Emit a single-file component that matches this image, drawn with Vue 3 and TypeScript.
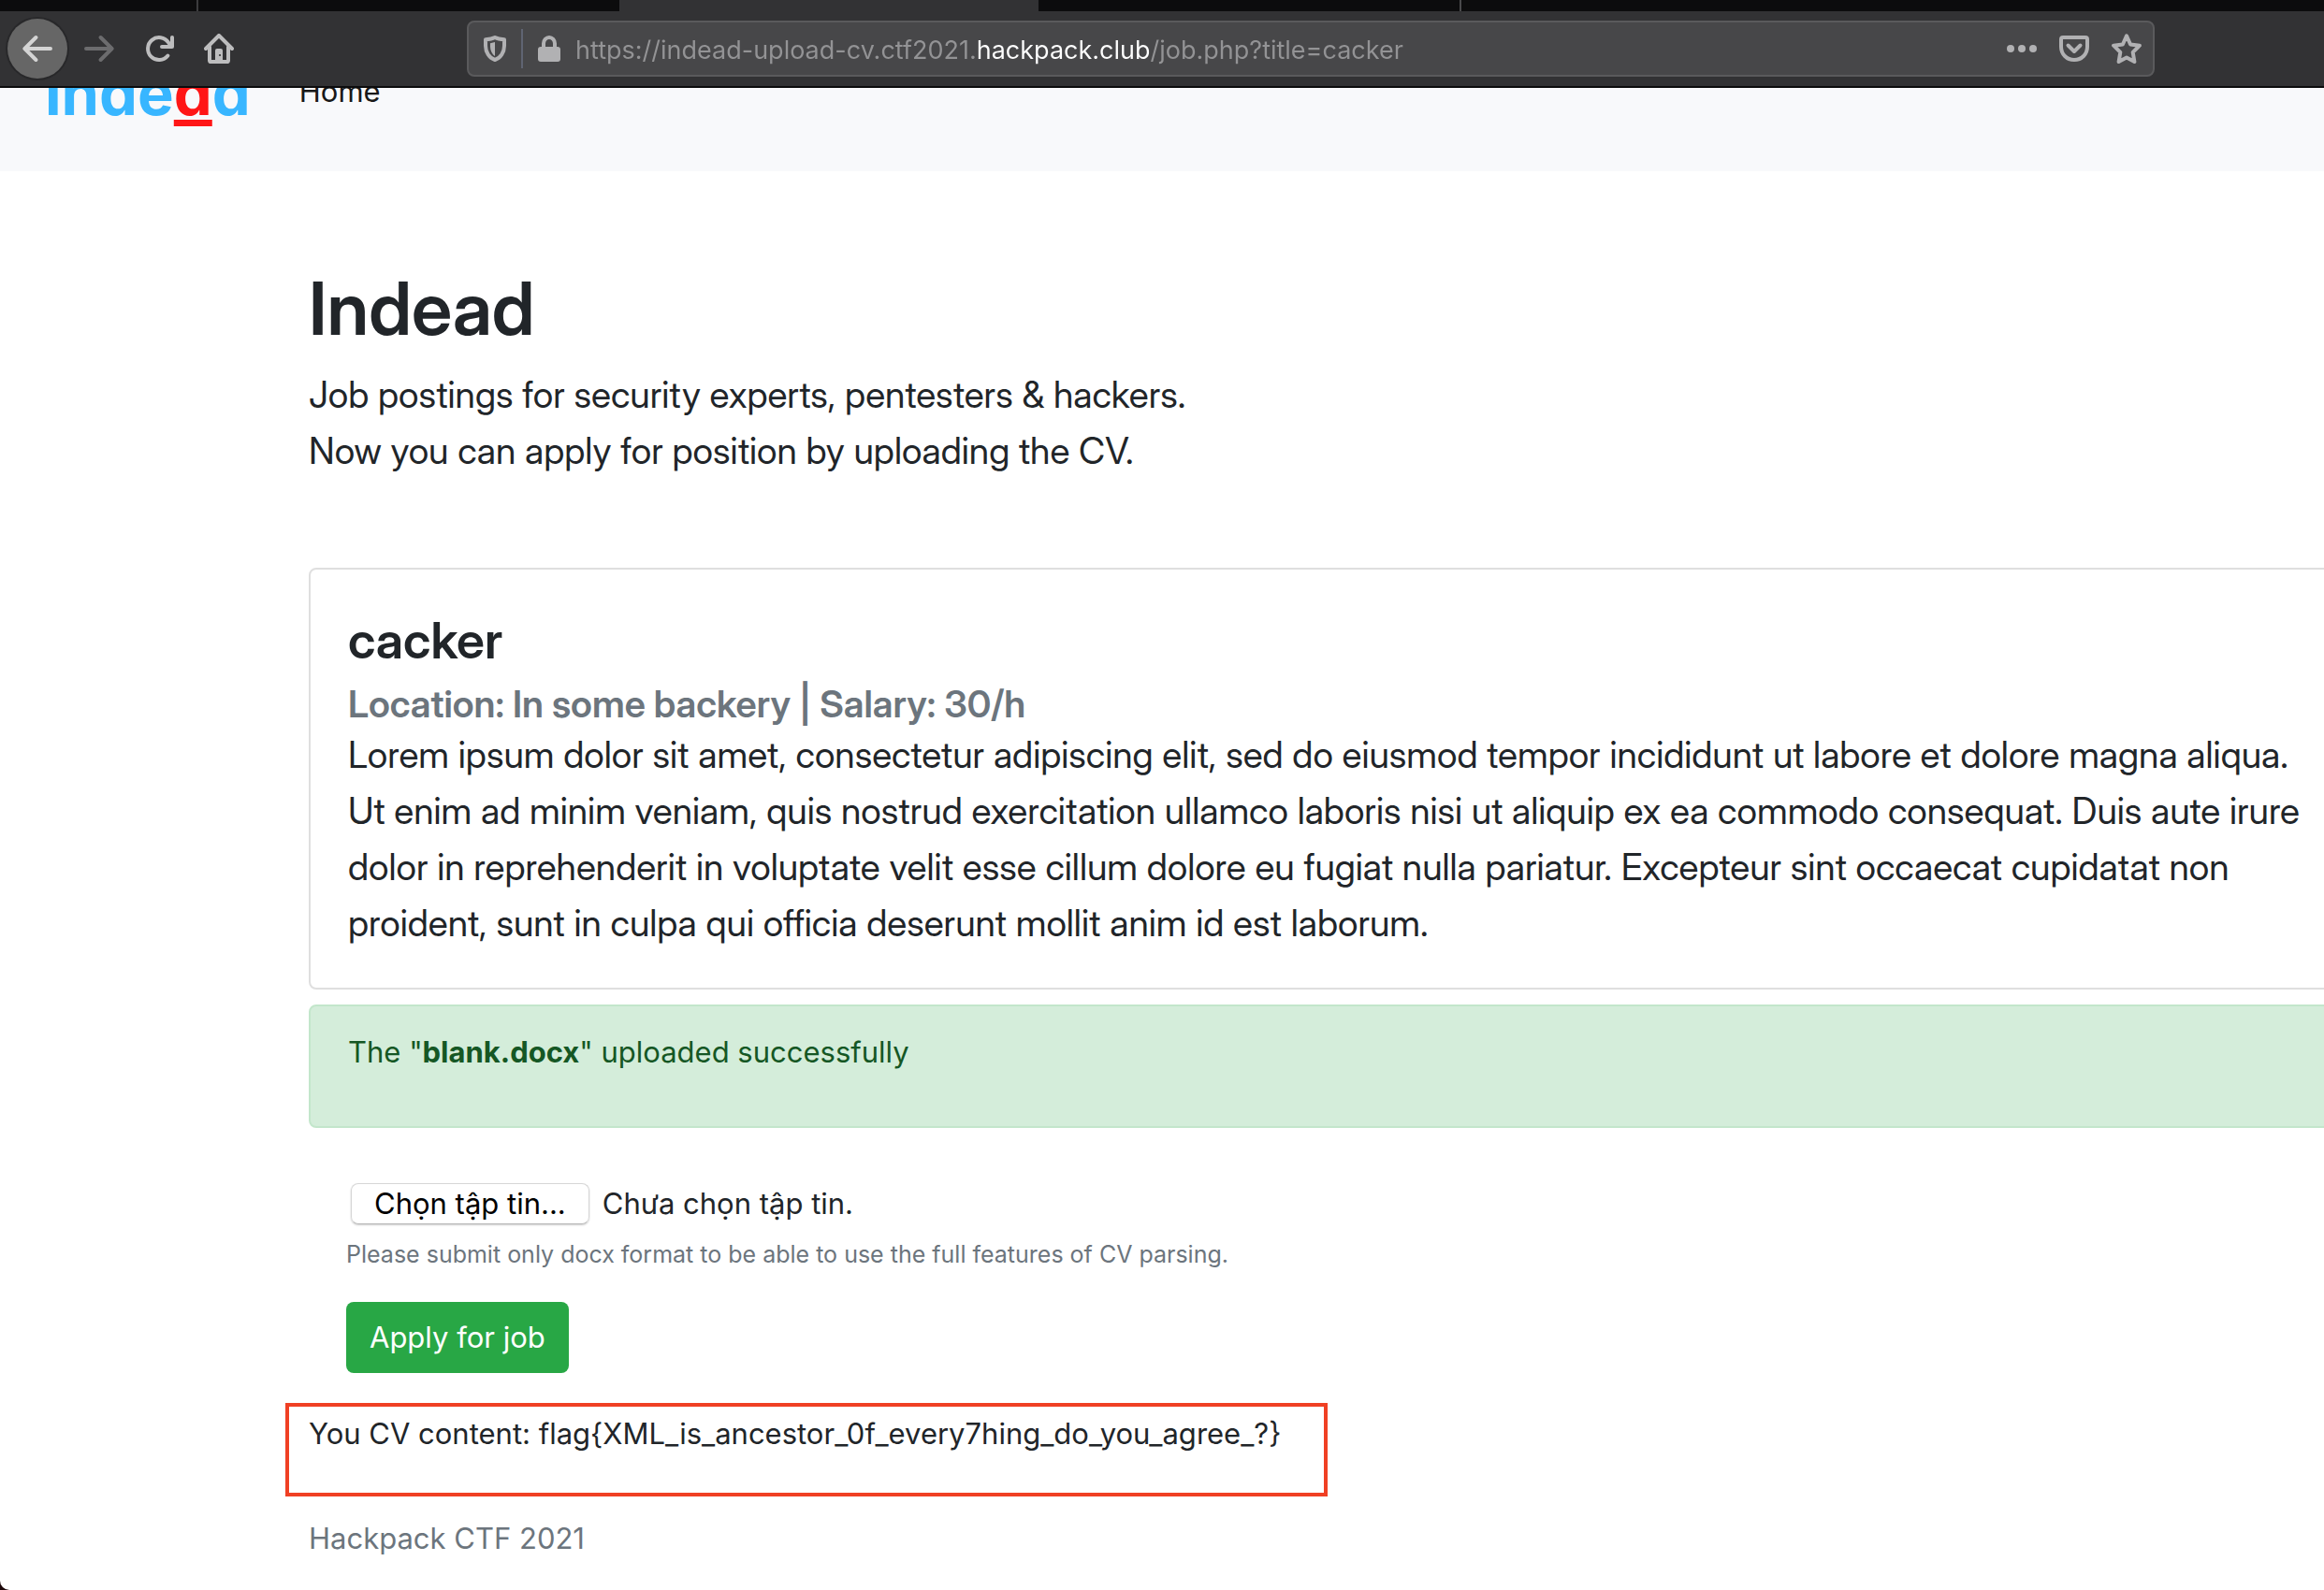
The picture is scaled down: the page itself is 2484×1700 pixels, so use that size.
<script setup lang="ts">
import { ref } from 'vue'

interface Job {
  title: string
  location: string
  salary: string
  description: string
}

const address = ref('https://indead-upload-cv.ctf2021.hackpack.club/job.php?title=cacker')

const job: Job = {
  title: 'cacker',
  location: 'In some backery',
  salary: '30/h',
  description:
    'Lorem ipsum dolor sit amet, consectetur adipiscing elit, sed do eiusmod tempor incididunt ut labore et dolore magna aliqua. Ut enim ad minim veniam, quis nostrud exercitation ullamco laboris nisi ut aliquip ex ea commodo consequat. Duis aute irure dolor in reprehenderit in voluptate velit esse cillum dolore eu fugiat nulla pariatur. Excepteur sint occaecat cupidatat non proident, sunt in culpa qui officia deserunt mollit anim id est laborum.',
}

const uploaded = 'blank.docx'
const cvContent = 'flag{XML_is_ancestor_0f_every7hing_do_you_agree_?}'
const fileName = ref('Chưa chọn tập tin.')

function onFile(event: Event) {
  const file = (event.target as HTMLInputElement).files?.[0]
  fileName.value = file ? file.name : 'Chưa chọn tập tin.'
}
</script>

<template>
  <div class="window">
    <header class="chrome">
      <div class="tabs">
        <span class="tab first"></span>
        <span class="tab second"></span>
        <span class="tab active"></span>
        <span class="tab fourth"></span>
      </div>
      <div class="toolbar">
        <button class="tool back" type="button" aria-label="Back">
          <svg viewBox="0 0 16 16"><path d="M15 8H1.5M7.2 2 1.2 8l6 6" /></svg>
        </button>
        <button class="tool forward" type="button" aria-label="Forward" disabled>
          <svg viewBox="0 0 16 16"><path d="M1 8h13.500M8.800 2l6 6-6 6" /></svg>
        </button>
        <button class="tool reload" type="button" aria-label="Reload">
          <svg viewBox="0 0 16 16"><path d="M12.700 11.800A6 6 0 1 1 13 4.700L14.500 6.800M15 2v5H9.500" /></svg>
        </button>
        <button class="tool home" type="button" aria-label="Home">
          <svg viewBox="0 0 16 16">
            <path d="M1 8 8 1l7 7M3 7v7.200q0 .8.800.8h8.400q.8 0 .8-.8V7" />
            <path class="solid" d="M6 15V9q0-1 1-1h2q1 0 1 1v6z" />
            <circle class="knob" cx="8.500" cy="11.500" r=".55" />
          </svg>
        </button>
        <div class="urlbar">
          <svg class="shield" viewBox="0 0 24 28">
            <path d="M12 2C9 3.600 6 4 2 4.200V11c0 7 4 13 10 15 6-2 10-8 10-15V4.200C18 4 15 3.600 12 2z" />
            <path class="solid" d="M12 7 7 8.200V12c0 4 2 8 5 10z" />
          </svg>
          <span class="divider"></span>
          <svg class="lock" viewBox="0 0 24 28">
            <path d="M6 14V8.500a6 6.500 0 0 1 12 0V14" />
            <rect class="solid" x="0" y="12" width="24" height="16" rx="3" />
          </svg>
          <input v-model="address" class="address" type="text" aria-label="Address" spellcheck="false" />
          <button class="page-action" type="button" aria-label="Page actions">
            <svg viewBox="0 0 32 32"><g class="solid"><circle cx="4" cy="16" r="4" /><circle cx="16" cy="16" r="4" /><circle cx="28" cy="16" r="4" /></g></svg>
          </button>
          <button class="page-action" type="button" aria-label="Save to Pocket">
            <svg viewBox="0 0 32 32">
              <path d="M4 4h24q2 0 2 2v8c0 8-6 14-14 14S2 22 2 14V6q0-2 2-2z" />
              <path d="m9.500 12.500 6.500 6.500 6.500-6.500" />
            </svg>
          </button>
          <button class="page-action" type="button" aria-label="Bookmark">
            <svg viewBox="0 0 32 32"><path d="m16 2.300 4.100 9.200 9.800 1.200-7.200 7.100 1.700 10.200-8.400-4.500L7.600 30l1.700-10.200-7.200-7.100 9.800-1.200z" /></svg>
          </button>
        </div>
      </div>
    </header>

    <div class="viewport">
      <nav class="navbar">
        <a class="brand" href="#">inde<span class="brand-mark">a</span>d</a>
        <a class="nav-link" href="#">Home</a>
      </nav>

      <main class="content">
        <h1>Indead</h1>
        <p class="lead">Job postings for security experts, pentesters &amp; hackers.<br />Now you can apply for position by uploading the CV.</p>

        <section class="card">
          <h2>{{ job.title }}</h2>
          <h3>Location: {{ job.location }} | Salary: {{ job.salary }}</h3>
          <p>{{ job.description }}</p>
        </section>

        <div class="alert" role="alert">The "<strong>{{ uploaded }}</strong>" uploaded successfully</div>

        <form class="apply" @submit.prevent>
          <label class="picker">
            <span class="picker-button">Chọn tập tin...</span>
            <span>{{ fileName }}</span>
            <input type="file" accept=".docx" @change="onFile" />
          </label>
          <small>Please submit only docx format to be able to use the full features of CV parsing.</small>
          <button class="submit" type="submit">Apply for job</button>
        </form>

        <div class="result">You CV content: {{ cvContent }}</div>

        <footer>Hackpack CTF 2021</footer>
      </main>
    </div>
  </div>
</template>

<style>
body {
  margin: 0;
  background: #1c0709;
}
</style>

<style scoped>
* {
  box-sizing: border-box;
}

.window {
  display: flex;
  flex-direction: column;
  min-height: 100vh;
  overflow: hidden;
  border-bottom-left-radius: 10px;
  background: #fff;
  color: #212529;
  font-family: Inter, "Noto Sans", sans-serif;
  font-size: 31px;
  line-height: 48px;
}

h1,
h2,
h3,
p {
  margin: 0;
}

/* Large text uses the display cut */
h1,
h2,
h3,
.lead,
.card p {
  font-family: "Inter Display", Inter, sans-serif;
}

h1,
h2,
h3 {
  font-weight: 600;
}

.lead,
.card p {
  font-size: 39px;
  line-height: 60px;
}

button,
input {
  font: inherit;
}

svg {
  display: block;
  fill: none;
  stroke: currentColor;
  stroke-width: 2;
  stroke-linecap: round;
  stroke-linejoin: round;
}

.solid {
  fill: currentColor;
  stroke: none;
}

.knob {
  fill: #323234;
  stroke: none;
}

/* Browser chrome */
.chrome {
  border-bottom: 2px solid #0c0c0d;
  background: #323234;
}

.tabs {
  display: flex;
  height: 12px;
  background: #0c0c0d;
}

.first {
  width: 212px;
  border-right: 2px solid #3c3c3e;
}

.second {
  width: 450px;
}

.active {
  width: 448px;
  background: #323234;
}

.fourth {
  width: 452px;
  border-right: 2px solid #4a4a4c;
}

.toolbar {
  display: flex;
  align-items: center;
  height: 80px;
  padding: 0 181px 0 8px;
}

.tool {
  display: grid;
  place-items: center;
  flex: none;
  width: 64px;
  height: 64px;
  padding: 0;
  border: 0;
  background: none;
  color: #bdbdbe;
}

.tool svg {
  width: 32px;
  height: 32px;
}

.back {
  border-radius: 50%;
  background: #666;
  box-shadow: 0 0 0 2px #28282a;
  color: #d4d4d4;
}

.forward {
  margin-left: 2px;
  color: #6c6c6e;
}

.urlbar {
  display: flex;
  flex: 1;
  align-items: center;
  height: 60px;
  margin-left: 233px;
  padding: 0 12px 0 16px;
  border: 2px solid #5a5a5c;
  border-radius: 8px;
  background: #474749;
  color: #b1b1b3;
}

.shield,
.lock {
  flex: none;
  width: 24px;
  height: 28px;
  stroke-width: 4;
}

.divider {
  width: 2px;
  height: 42px;
  margin: 0 16px;
  background: #5f6472;
}

.address {
  flex: 1;
  min-width: 0;
  height: 48px;
  margin-left: 16px;
  padding: 3px 0 0;
  border: 0;
  outline: 0;
  /* Only the registered domain is emphasised */
  background: linear-gradient(90deg, #939395 430px, #fff 430px 613px, #939395 613px);
  -webkit-background-clip: text;
  background-clip: text;
  -webkit-text-fill-color: transparent;
  font-size: 27px;
}

.page-action {
  flex: none;
  width: 32px;
  height: 32px;
  margin-left: 24px;
  padding: 0;
  border: 0;
  background: none;
  color: inherit;
}

.page-action svg {
  stroke-width: 4;
}

/* Page, scrolled so that the bar is partly out of view */
.viewport {
  flex: 1;
  overflow: hidden;
}

.navbar {
  display: flex;
  align-items: center;
  height: 170px;
  margin-top: -81px;
  padding-left: 48px;
  background: #f8f9fb;
}

.brand {
  padding-top: 3px;
  color: #38b6ff;
  font-size: 65px;
  font-weight: 700;
  font-feature-settings: "cv11";
  line-height: 80px;
  text-decoration: none;
}

.brand-mark {
  color: #ff1616;
  text-decoration: underline;
  text-decoration-thickness: 7px;
  text-underline-offset: 5px;
  text-decoration-skip-ink: none;
}

.nav-link {
  margin-left: 52px;
  color: #181818;
  text-decoration: none;
}

.content {
  margin-right: -64px;
  padding: 99px 0 29px 330px;
}

h1 {
  font-size: 78px;
  line-height: 96px;
}

.lead {
  margin-top: 14px;
}

.card {
  margin-top: 95px;
  padding: 44px 62px 39px 40px;
  border: 2px solid #dfdfdf;
  border-radius: 8px;
}

h2 {
  font-size: 54px;
  line-height: 64px;
}

h3 {
  margin-top: 12px;
  color: #6c757d;
  font-size: 40px;
  line-height: 48px;
}

.alert {
  margin-top: 16px;
  padding: 25px 40px 55px;
  border: 2px solid #c3e6cb;
  border-radius: 8px;
  background: #d4edda;
  color: #155724;
}

.apply {
  display: flex;
  flex-direction: column;
  align-items: flex-start;
  margin-top: 59px;
  padding-left: 40px;
}

.picker {
  display: flex;
  position: relative;
  align-items: center;
  gap: 14px;
  height: 44px;
  padding-left: 5px;
}

.picker-button {
  padding: 0 24px;
  border: 1px solid #d6d6d6;
  border-bottom-color: #b8b8b8;
  border-radius: 8px;
  box-shadow: 0 1px 2px #0003;
  color: #000;
  line-height: 42px;
}

.picker input {
  position: absolute;
  inset: 0;
  width: 100%;
  opacity: 0;
}

small {
  margin-top: 14px;
  color: #6c757d;
  font-size: 25px;
  line-height: 36px;
}

.submit {
  height: 76px;
  margin-top: 33px;
  padding: 0 25px;
  border: 0;
  border-radius: 8px;
  background: #28a745;
  color: #fff;
}

.result {
  width: fit-content;
  height: 100px;
  margin: 32px 0 0 -25px;
  padding: 5px 46px 0 21px;
  border: 4px solid #f04024;
}

footer {
  margin-top: 21px;
  color: #6c757d;
}
</style>
